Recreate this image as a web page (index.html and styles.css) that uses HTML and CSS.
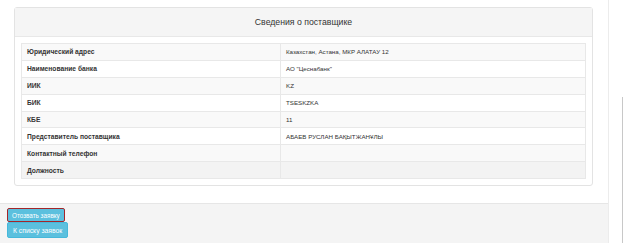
FILE: index.html
```html
<!DOCTYPE html>
<html lang="ru">
<head>
    <meta charset="UTF-8">
    <meta name="viewport" content="width=device-width, initial-scale=1.0">
    <title>Сведения о поставщике</title>
    <link rel="stylesheet" href="styles.css">
</head>
<body>
    <div class="page">
        <div class="main">
            <div class="content">
                <div class="panel">
                    <div class="panel-heading">Сведения о поставщике</div>
                    <div class="panel-body">
                        <table class="info">
                            <tr><th>Юридический адрес</th><td>Казахстан, Астана, МКР АЛАТАУ 12</td></tr>
                            <tr><th>Наименование банка</th><td>АО "Цеснабанк"</td></tr>
                            <tr><th>ИИК</th><td>KZ</td></tr>
                            <tr><th>БИК</th><td>TSESKZKA</td></tr>
                            <tr><th>КБЕ</th><td>11</td></tr>
                            <tr><th>Представитель поставщика</th><td>АБАЕВ РУСЛАН БАҚЫТЖАНҰЛЫ</td></tr>
                            <tr><th>Контактный телефон</th><td></td></tr>
                            <tr class="hover"><th>Должность</th><td></td></tr>
                        </table>
                    </div>
                </div>
            </div>
            <div class="footer">
                <button class="btn btn-small focused">Отозвать заявку</button>
                <button class="btn">К списку заявок</button>
            </div>
        </div>
        <div class="scroll">
            <div class="thumb"></div>
        </div>
    </div>
</body>
</html>
```

FILE: styles.css
```css
html, body {
    margin: 0;
    height: 100%;
    background: #fff;
    font-family: "Liberation Sans", Arial, sans-serif;
    color: #333;
}
.page {
    display: flex;
    height: 243px;
}
.main {
    width: 608px;
    border-right: 1px solid #ececec;
    display: flex;
    flex-direction: column;
}
.content {
    padding: 7px 15px 17px 14px;
}
.panel {
    border: 1px solid #e3e3e3;
    border-radius: 3px;
    background: #fff;
}
.panel-heading {
    height: 28px;
    background: #f5f5f5;
    border-bottom: 1px solid #e8e8e8;
    display: flex;
    align-items: center;
    justify-content: center;
    font-size: 8.7px;
    color: #333;
}
.panel-body {
    padding: 6px;
}
.info {
    width: 100%;
    border-collapse: collapse;
    font-size: 6.2px;
}
.info th, .info td {
    border: 1px solid #e8e8e8;
    height: 15.9px;
    padding: 0 5px;
    text-align: left;
    vertical-align: middle;
}
.info th {
    width: 248px;
    font-weight: bold;
    font-size: 6.7px;
}
.info tr:nth-child(odd) {
    background: #f9f9f9;
}
.info tr.hover {
    background: #f3f3f3;
}
.footer {
    flex: 1;
    background: #f4f4f4;
    border-top: 1px solid #e6e6e6;
    padding: 4px 7px;
    display: flex;
    flex-direction: column;
    align-items: flex-start;
}
.btn {
    background: #5bc0de;
    color: #fff;
    border: 1px solid #46b8da;
    border-radius: 2px;
    font-family: "Liberation Sans", Arial, sans-serif;
    font-size: 6.8px;
    height: 16px;
    padding: 0 5px;
}
.btn-small {
    height: 14px;
    font-size: 6.3px;
    padding: 0 4px;
}
.focused {
    border-color: #a3262a;
}
.scroll {
    flex: 1;
    display: flex;
    justify-content: flex-end;
}
.thumb {
    width: 1px;
    margin-top: 97px;
    background: #c8c8c8;
}
```
